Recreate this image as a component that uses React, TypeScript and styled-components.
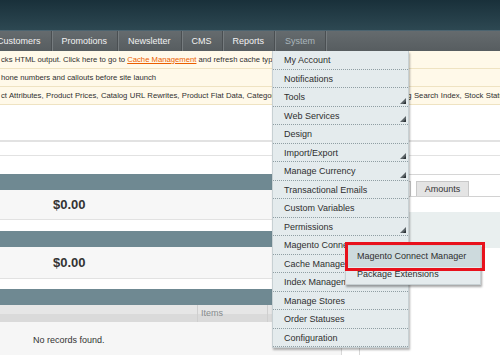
import styled, { createGlobalStyle } from "styled-components";

const GlobalStyle = createGlobalStyle`
  html, body {
    margin: 0;
    padding: 0;
    background: #fff;
    font-family: "Liberation Sans", Arial, sans-serif;
  }
  body { width: 500px; height: 355px; overflow: hidden; }
`;

const Page = styled.div`
  width: 500px;
  height: 355px;
  overflow: hidden;
  position: relative;
`;

const Header = styled.div`
  height: 30px;
  background: linear-gradient(#19303a, #2d4852);
  border-bottom: 1px solid #4c6470;
`;

const Nav = styled.ul`
  display: flex;
  margin: 0 0 0 -13px;
  padding: 0;
  list-style: none;
  height: 20px;
  background: linear-gradient(#656b6e, #575d60);
`;

const NavItem = styled.li<{ $active?: boolean }>`
  position: relative;
  padding: 0 10px;
  border-right: 1px solid #4a4f52;
  box-shadow: 1px 0 0 #767c7f;
  font-size: 9px;
  line-height: 20px;
  color: ${(p) => (p.$active ? "#aab6bc" : "#f2f2f2")};
  white-space: nowrap;
`;

const Notices = styled.div`
  background: #fff9e9;
`;

const Notice = styled.div<{ $shift?: number }>`
  height: 17px;
  line-height: 17px;
  border-bottom: 1px solid #efe3c2;
  font-size: 7.7px;
  color: #2f2f2f;
  white-space: nowrap;
  overflow: hidden;
  padding-left: 1px;
  word-spacing: ${(p) => p.$shift ?? 0}px;

  a {
    color: #eb5e00;
    text-decoration: underline;
  }
`;

const Spacer = styled.div<{ $h: number }>`
  height: ${(p) => p.$h}px;
`;

const Rule = styled.div<{ $w: number; $c: string }>`
  border-top: ${(p) => p.$w}px solid ${(p) => p.$c};
`;

const Columns = styled.div`
  display: flex;
  gap: 17px;
`;

const LeftCol = styled.div`
  width: 342px;
  flex-shrink: 0;
`;

const BoxHead = styled.div`
  height: 16px;
  background: #6f8992;
`;

const StatRow = styled.div<{ $h: number }>`
  height: ${(p) => p.$h}px;
  background: #f7f7f7;
  border-bottom: 1px solid #e2e2e2;
  display: flex;
  align-items: center;
  padding-left: 53px;
  font-size: 13px;
  font-weight: bold;
  color: #333;
`;

const GridHead = styled.div`
  display: flex;
  height: 17px;
  background: linear-gradient(#e6e6e6 50%, #dadada 50%);
  border-right: 1px solid #d0d0d0;
`;

const GridCell = styled.div<{ $w: number }>`
  box-sizing: border-box;
  width: ${(p) => p.$w}px;
  flex-shrink: 0;
  border-right: 1px solid #cfcfcf;
  font-size: 9px;
  color: #858a8c;
  padding-left: 3px;
  line-height: 16px;
`;

const GridBody = styled.div`
  height: 40px;
  background: #f6f6f6;
  border-right: 1px solid #d8d8d8;
  font-size: 9px;
  color: #333;
  padding: 13px 0 0 33px;
  box-sizing: border-box;
`;

const RightCol = styled.div`
  flex: 1;
  border-top: 1px solid #d6d6d6;
  margin-top: 18px;
`;

const Tabs = styled.div`
  display: flex;
  gap: 5px;
  margin-top: 6px;
  border-bottom: 1px solid #d2d2d2;
  height: 15px;
`;

const Tab = styled.div<{ $active?: boolean }>`
  width: ${(p) => (p.$active ? 50 : 51)}px;
  border: 1px solid #c8c8c8;
  border-bottom: none;
  background: ${(p) => (p.$active ? "#fff" : "#e4e4e4")};
  font-size: 9px;
  line-height: 15px;
  text-align: center;
  color: #333;
`;

const TabBody = styled.div`
  border-left: 1px solid #d8d8d8;
  padding-top: 15px;
  height: 160px;
`;

const Chart = styled.div`
  height: 36px;
  background: #e9efef;
`;

const Dropdown = styled.ul`
  position: absolute;
  top: 20px;
  left: -3px;
  width: 135px;
  margin: 0;
  padding: 0;
  list-style: none;
  background: #e4ebed;
  border: 1px solid #c7d0d3;
  border-top: none;
  box-shadow: 1px 2px 2px rgba(0, 0, 0, 0.3);
`;

const DropItem = styled.li`
  position: relative;
  height: 18.5px;
  line-height: 18px;
  box-sizing: border-box;
  padding-left: 11px;
  font-size: 9px;
  color: #2f2f2f;
  border-bottom: 1px dotted #8f9ea3;

  &:last-child {
    border-bottom: none;
  }
`;

const Arrow = styled.svg`
  position: absolute;
  right: 2px;
  bottom: 2px;
`;

const SubMenu = styled.ul`
  position: absolute;
  top: 194px;
  left: 72px;
  width: 134px;
  margin: 0;
  padding: 0;
  list-style: none;
  background: #e4ebed;
  border: 1px solid #c7d0d3;
  box-shadow: 1px 2px 2px rgba(0, 0, 0, 0.35);
  z-index: 2;
`;

const SubItem = styled.li<{ $hl?: boolean }>`
  height: ${(p) => (p.$hl ? 21 : 17)}px;
  line-height: ${(p) => (p.$hl ? 21 : 15)}px;
  padding-left: 11px;
  font-size: 9px;
  color: #2f2f2f;
  background: ${(p) => (p.$hl ? "#cddadd" : "transparent")};
`;

const Highlight = styled.div`
  position: absolute;
  top: -4px;
  left: -1px;
  width: 134px;
  height: 23px;
  border: 3px solid #e8111c;
  pointer-events: none;
`;

const navItems = ["Customers", "Promotions", "Newsletter", "CMS", "Reports"];

const systemItems: [string, boolean][] = [
  ["My Account", false],
  ["Notifications", false],
  ["Tools", true],
  ["Web Services", true],
  ["Design", false],
  ["Import/Export", true],
  ["Manage Currency", true],
  ["Transactional Emails", false],
  ["Custom Variables", false],
  ["Permissions", true],
  ["Magento Connect", true],
  ["Cache Management", false],
  ["Index Management", false],
  ["Manage Stores", false],
  ["Order Statuses", false],
  ["Configuration", false],
];

const SubArrow = () => (
  <Arrow width="6" height="6" viewBox="0 0 6 6">
    <path d="M6 0 L6 6 L0 6 Z" fill="#5a6266" />
    <path d="M6 3 L6 6 L3 6 Z" fill="#2d3336" />
  </Arrow>
);

export default function App() {
  return (
    <Page>
      <GlobalStyle />
      <Header />
      <Nav>
        {navItems.map((n) => (
          <NavItem key={n}>{n}</NavItem>
        ))}
        <NavItem $active>
          System
          <Dropdown>
            {systemItems.map(([label, sub]) => (
              <DropItem key={label}>
                {label}
                {sub && <SubArrow />}
              </DropItem>
            ))}
            <SubMenu>
              <SubItem $hl>Magento Connect Manager</SubItem>
              <SubItem>Package Extensions</SubItem>
              <Highlight />
            </SubMenu>
          </Dropdown>
        </NavItem>
      </Nav>
      <Notices>
        <Notice>
          cks HTML output. Click here to go to <a>Cache Management</a> and
          refresh cache types.
        </Notice>
        <Notice>hone numbers and callouts before site launch</Notice>
        <Notice $shift={0.3}>
          ct Attributes, Product Prices, Catalog URL Rewrites, Product Flat
          Data, Category Flat Data, Category Products, Catalog Search Index,
          Stock Status
        </Notice>
      </Notices>
      <Spacer $h={35} />
      <Rule $w={2} $c="#e2e2e2" />
      <Spacer $h={13} />
      <Rule $w={1} $c="#e2e2e2" />
      <Columns>
        <LeftCol>
          <Spacer $h={18} />
          <BoxHead />
          <StatRow $h={29}>$0.00</StatRow>
          <Spacer $h={11} />
          <BoxHead />
          <StatRow $h={31}>$0.00</StatRow>
          <Spacer $h={10} />
          <BoxHead />
          <GridHead>
            <GridCell $w={198}></GridCell>
            <GridCell $w={70}>Items</GridCell>
          </GridHead>
          <GridBody>No records found.</GridBody>
        </LeftCol>
        <RightCol>
          <Tabs>
            <Tab $active>Sales</Tab>
            <Tab>Amounts</Tab>
          </Tabs>
          <TabBody>
            <Chart />
          </TabBody>
        </RightCol>
      </Columns>
    </Page>
  );
}
